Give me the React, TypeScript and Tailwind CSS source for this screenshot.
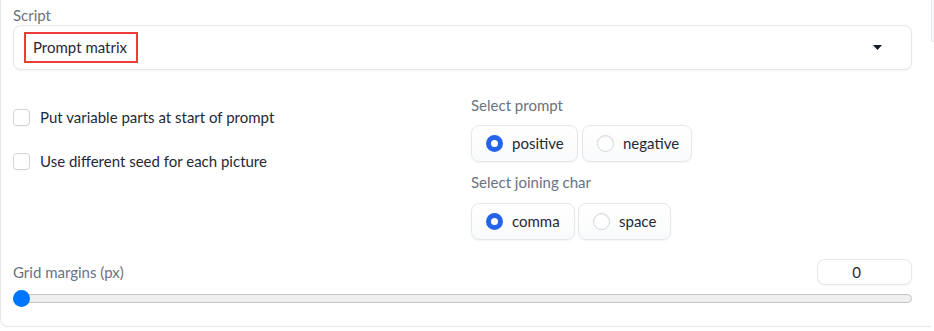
import React from "react";

function Radio({ checked, label, w }: { checked: boolean; label: string; w: string }) {
  return (
    <div
      className={`flex items-center gap-[9px] h-[37px] ${w} pl-[14px] rounded-lg border border-[#e5e7eb] bg-gradient-to-b from-white to-[#f9fafb] shadow-[0_1px_2px_rgba(0,0,0,0.05)]`}
    >
      {checked ? (
        <span className="w-[17px] h-[17px] rounded-full border-[5px] border-[#2563eb] bg-white shrink-0" />
      ) : (
        <span className="w-[17px] h-[17px] rounded-full border border-[#d1d5db] bg-white shrink-0 shadow-[inset_0_1px_1px_rgba(0,0,0,0.05)]" />
      )}
      <span className="text-[15px] text-[#1f2937] leading-none">{label}</span>
    </div>
  );
}

function Check({ label }: { label: string }) {
  return (
    <div className="flex items-center gap-[10px] h-[20px]">
      <span className="w-[17px] h-[17px] rounded-[4px] border border-[#d1d5db] bg-white shrink-0 shadow-[0_1px_1px_rgba(0,0,0,0.03)]" />
      <span className="text-[15px] text-[#1f2937] leading-none">{label}</span>
    </div>
  );
}

export default function App() {
  return (
    <div className="w-[934px] h-[331px] bg-white overflow-hidden font-['Lato','Open_Sans',sans-serif]">
      <div className="flex h-[327px]">
        <div className="flex-1 h-[327px] border-b border-l border-[#e5e7eb] rounded-bl-lg pl-[12px] pt-[5px]">
          <div className="w-[899px]">
            <div className="h-[20px] flex items-center text-[15px] text-[#6b7280]">Script</div>
            <div className="h-[45px] rounded-lg border border-[#e5e7eb] bg-white shadow-[0_1px_2px_rgba(0,0,0,0.05)] flex items-center pl-[10px] pr-[29px]">
              <div className="h-[31px] border-2 border-[#ef3b3b] flex items-center pl-[7px] w-[114px]">
                <span className="text-[15px] text-[#1f2937] leading-none">Prompt matrix</span>
              </div>
              <div className="flex-1" />
              <svg width="9" height="5" viewBox="0 0 9 5">
                <path d="M0 0 H9 L4.5 5 Z" fill="#111827" />
              </svg>
            </div>

            <div className="flex mt-[25px]">
              <div className="w-[458px] flex flex-col gap-[24px] pt-[12px]">
                <Check label="Put variable parts at start of prompt" />
                <Check label="Use different seed for each picture" />
              </div>
              <div className="flex flex-col">
                <div className="h-[20px] flex items-center text-[15px] text-[#6b7280]">Select prompt</div>
                <div className="flex gap-[4px] mt-[10px]">
                  <Radio checked label="positive" w="w-[107px]" />
                  <Radio checked={false} label="negative" w="w-[110px]" />
                </div>
                <div className="h-[20px] flex items-center text-[15px] text-[#6b7280] mt-[10px]">Select joining char</div>
                <div className="flex gap-[3px] mt-[11px]">
                  <Radio checked label="comma" w="w-[104px]" />
                  <Radio checked={false} label="space" w="w-[93px]" />
                </div>
              </div>
            </div>

            <div className="flex items-center justify-between mt-[19px]">
              <div className="text-[15px] text-[#6b7280] leading-none">Grid margins (px)</div>
              <div className="w-[95px] h-[26px] rounded-lg border border-[#e5e7eb] bg-white shadow-[0_1px_2px_rgba(0,0,0,0.05)] flex items-center justify-center pr-[16px]">
                <span className="text-[15px] text-[#1f2937] leading-none">0</span>
              </div>
            </div>
            <div className="relative mt-[5px] h-[17px] flex items-center">
              <div className="w-full h-[9px] rounded-full bg-[#efefef] border border-[#c4c4c4]" />
              <div className="absolute left-0 top-0 w-[17px] h-[17px] rounded-full bg-[#0075ff]" />
            </div>
          </div>
        </div>
        <div className="w-[3px] h-[42px] bg-[#f9fafb] border-l border-b border-[#e5e7eb] rounded-bl-md" />
      </div>
    </div>
  );
}
